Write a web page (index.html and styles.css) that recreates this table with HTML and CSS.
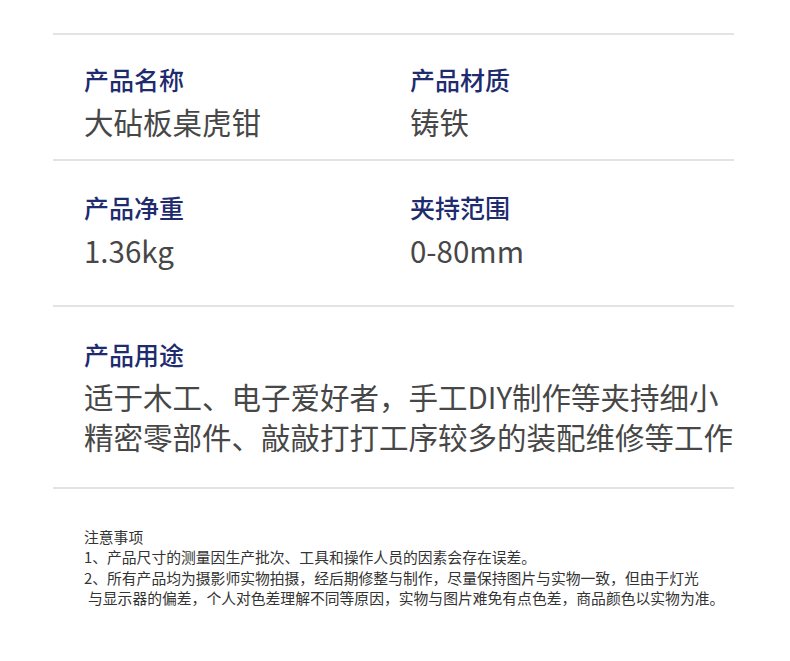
FILE: index.html
```html
<!DOCTYPE html>
<html lang="zh-CN">
<head>
<meta charset="utf-8">
<link rel="stylesheet" href="styles.css">
</head>
<body>
<div class="page">
  <section class="row row-1">
    <div class="cell">
      <div class="label">产品名称</div>
      <div class="value">大砧板桌虎钳</div>
    </div>
    <div class="cell">
      <div class="label">产品材质</div>
      <div class="value">铸铁</div>
    </div>
  </section>
  <section class="row row-2">
    <div class="cell">
      <div class="label">产品净重</div>
      <div class="value">1.36kg</div>
    </div>
    <div class="cell">
      <div class="label">夹持范围</div>
      <div class="value">0-80mm</div>
    </div>
  </section>
  <section class="row row-3">
    <div class="cell wide">
      <div class="label">产品用途</div>
      <div class="value para">适于木工、电子爱好者，手工DIY制作等夹持细小<br>精密零部件、敲敲打打工序较多的装配维修等工作</div>
    </div>
  </section>
  <div class="notes">
    <div>注意事项</div>
    <div>1、产品尺寸的测量因生产批次、工具和操作人员的因素会存在误差。</div>
    <div>2、所有产品均为摄影师实物拍摄，经后期修整与制作，尽量保持图片与实物一致，但由于灯光</div>
    <div class="indent">与显示器的偏差，个人对色差理解不同等原因，实物与图片难免有点色差，商品颜色以实物为准。</div>
  </div>
</div>
</body>
</html>
```

FILE: styles.css
```css
html, body {
  margin: 0;
  padding: 0;
  background: #ffffff;
}
body {
  font-family: "Noto Sans CJK SC", "Noto Sans", sans-serif;
}
.page {
  width: 681px;
  margin-left: 53px;
  padding-top: 33px;
}
.row {
  display: grid;
  grid-template-columns: 326px 1fr;
  border-top: 2px solid #e3e3e3;
  padding-left: 31px;
}
.row-1 { padding-top: 29px; padding-bottom: 18px; }
.row-2 { padding-top: 31px; padding-bottom: 35px; }
.row-3 { padding-top: 32px; padding-bottom: 31px; grid-template-columns: 1fr; border-bottom: 2px solid #e3e3e3; }
.label {
  font-size: 25px;
  line-height: 30px;
  color: #1e2b6f;
  font-weight: 500;
  margin-bottom: 7px;
}
.value {
  font-size: 29.5px;
  line-height: 40px;
  color: #474747;
  font-weight: 400;
}
.row-2 .label { margin-bottom: 8px; }
.notes {
  margin-top: 38px;
  padding-left: 31px;
  font-size: 14.8px;
  line-height: 20.3px;
  color: #333333;
}
.indent {
  padding-left: 4px;
}
```
